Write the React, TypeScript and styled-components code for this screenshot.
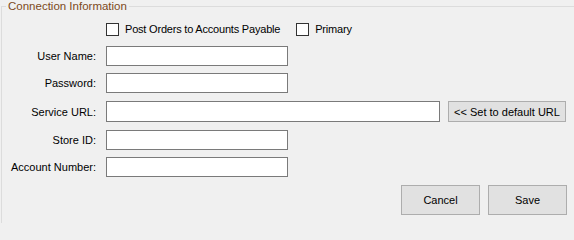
import React, { useState } from 'react';
import styled, { createGlobalStyle } from 'styled-components';

const GlobalStyle = createGlobalStyle`
  html, body {
    margin: 0;
    padding: 0;
    background: #f0f0f0;
    overflow: hidden;
  }
  body {
    font-family: "Liberation Sans", Arial, sans-serif;
    font-size: 11px;
    color: #000;
  }
`;

const Page = styled.div`
  width: 574px;
  height: 223px;
  padding-left: 1px;
  box-sizing: border-box;
  background: #f0f0f0;
  display: flex;
  flex-direction: column;
`;

const GroupBox = styled.fieldset`
  flex: 1;
  margin: 0;
  padding: 0;
  min-width: 0;
  border: none;
  border-top: 1px solid #dcdcdc;
  border-left: 1px solid #dcdcdc;
`;

const Caption = styled.legend`
  margin-left: 4px;
  padding: 0 2px;
  line-height: 13px;
  font-size: 11.5px;
  color: #7c4a1c;
`;

const Form = styled.div`
  display: flex;
  flex-direction: column;
  padding-top: 10px;
`;

const Row = styled.div<{ $mt?: number }>`
  display: flex;
  align-items: center;
  margin-top: ${p => p.$mt ?? 0}px;
`;

const Label = styled.label`
  width: 94px;
  flex: none;
  text-align: right;
  margin-right: 10px;
  line-height: 14px;
  white-space: nowrap;
`;

const Spacer = styled.div`
  width: 104px;
  flex: none;
`;

const CheckGroup = styled.div`
  display: flex;
  align-items: center;
  gap: 16px;
`;

const CheckItem = styled.label`
  display: flex;
  align-items: center;
  gap: 6px;
  line-height: 13px;
  letter-spacing: -0.2px;
  cursor: default;
  white-space: nowrap;
`;

const Box = styled.span<{ $on: boolean }>`
  width: 13px;
  height: 13px;
  box-sizing: border-box;
  border: 1px solid #333;
  background: #fff;
  display: flex;
  align-items: center;
  justify-content: center;
  font-size: 10px;
  line-height: 1;
  color: #000;
`;

const TextBox = styled.input<{ $w: number; $h?: number }>`
  width: ${p => p.$w}px;
  height: ${p => p.$h ?? 20}px;
  box-sizing: border-box;
  margin: 0;
  padding: 1px 3px;
  border: 1px solid #7a7a7a;
  background: #fff;
  font-family: inherit;
  font-size: 11px;
  outline: none;
`;

const Button = styled.button<{ $w: number; $h: number }>`
  width: ${p => p.$w}px;
  height: ${p => p.$h}px;
  box-sizing: border-box;
  margin: 0;
  padding: 0;
  border: 1px solid #adadad;
  background: #e1e1e1;
  font-family: inherit;
  font-size: 11px;
  color: #000;
  white-space: nowrap;
`;

const UrlButton = styled(Button)`
  margin-left: 8px;
`;

const Actions = styled.div`
  display: flex;
  justify-content: flex-end;
  gap: 8px;
  margin-top: 8px;
  padding-right: 7px;
`;

const Check: React.FC<{ label: string }> = ({ label }) => {
  const [on, setOn] = useState(false);
  return (
    <CheckItem onClick={() => setOn(!on)}>
      <Box $on={on}>{on ? '✓' : ''}</Box>
      {label}
    </CheckItem>
  );
};

const App: React.FC = () => {
  return (
    <Page>
      <GlobalStyle />
      <GroupBox>
        <Caption>Connection Information</Caption>
        <Form>
          <Row>
            <Spacer />
            <CheckGroup>
              <Check label="Post Orders to Accounts Payable" />
              <Check label="Primary" />
            </CheckGroup>
          </Row>
          <Row $mt={10}>
            <Label>User Name:</Label>
            <TextBox $w={182} />
          </Row>
          <Row $mt={7}>
            <Label>Password:</Label>
            <TextBox $w={182} type="password" />
          </Row>
          <Row $mt={8}>
            <Label>Service URL:</Label>
            <TextBox $w={334} $h={21} />
            <UrlButton $w={118} $h={21}>&lt;&lt; Set to default URL</UrlButton>
          </Row>
          <Row $mt={8}>
            <Label>Store ID:</Label>
            <TextBox $w={182} />
          </Row>
          <Row $mt={7}>
            <Label>Account Number:</Label>
            <TextBox $w={182} />
          </Row>
          <Actions>
            <Button $w={79} $h={30}>Cancel</Button>
            <Button $w={79} $h={30}>Save</Button>
          </Actions>
        </Form>
      </GroupBox>
    </Page>
  );
};

export default App;
